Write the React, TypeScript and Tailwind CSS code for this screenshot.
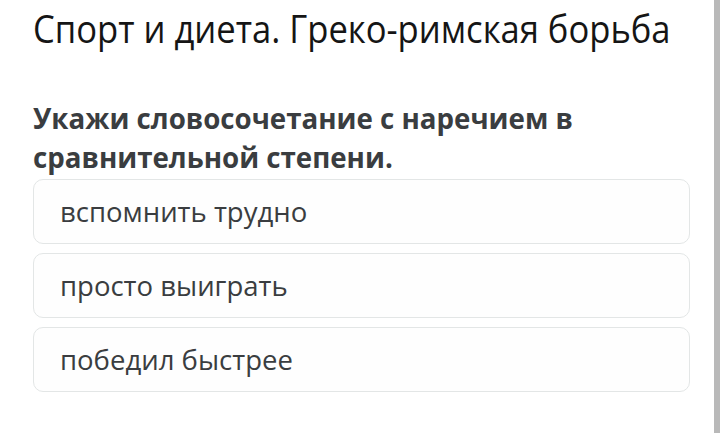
const options = ["вспомнить трудно", "просто выиграть", "победил быстрее"];

export default function App() {
  return (
    <div className="flex h-[433px] w-[720px] overflow-hidden bg-white font-['Open_Sans',sans-serif]">
      <div className="min-w-0 flex-1 pl-[33px] pr-[24px]">
        <h1 className="mt-[5px] origin-left scale-x-[0.91] whitespace-nowrap text-[38px] leading-[46px] text-[#151515]">
          Спорт и диета. Греко-римская борьба
        </h1>
        <p className="mt-[48px] text-[27.7px] font-bold leading-[39px] text-[#3a3d40]">
          Укажи словосочетание с наречием в
          <br />
          сравнительной степени.
        </p>
        <div className="mt-[2px] flex flex-col gap-[9px]">
          {options.map((o) => (
            <div
              key={o}
              className="flex h-[65px] items-center rounded-[10px] border border-[#e3e6e6] bg-[#fefefe] pl-[26px] text-[27.5px] text-[#3a3d40]"
            >
              {o}
            </div>
          ))}
        </div>
      </div>
      <div className="w-[6px] bg-[#b9b9b9]" />
    </div>
  );
}
